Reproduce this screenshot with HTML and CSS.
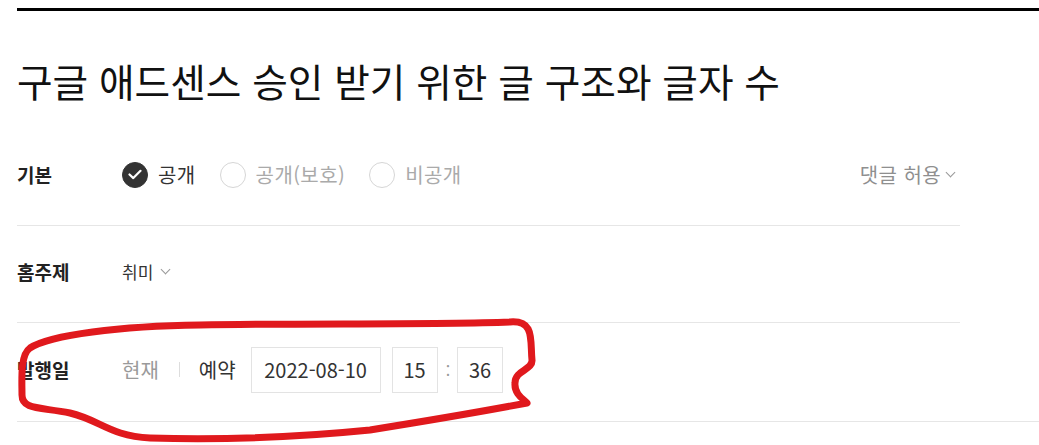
FILE: index.html
```html
<!DOCTYPE html>
<html lang="ko">
<head>
    <meta charset="UTF-8">
    <meta name="viewport" content="width=device-width, initial-scale=1.0">
    <title>글쓰기 발행</title>
    <link rel="stylesheet" href="styles.css">
</head>
<body>
    <div class="editor">
        <h1 class="post-title">구글 애드센스 승인 받기 위한 글 구조와 글자 수</h1>

        <div class="publish-form">
            <div class="form-row">
                <div class="row-label">기본</div>
                <div class="row-body">
                    <label class="radio checked"><span class="radio-mark">
                        <svg width="14" height="11" viewBox="0 0 14 11"><path d="M1.5 5.5l3.8 3.6L12.5 1.8" fill="none" stroke="#fff" stroke-width="2.2" stroke-linecap="round" stroke-linejoin="round"/></svg>
                    </span>공개</label>
                    <label class="radio"><span class="radio-mark"></span>공개(보호)</label>
                    <label class="radio"><span class="radio-mark"></span>비공개</label>
                    <div class="comment-opt">댓글 허용<span class="chevron"></span></div>
                </div>
            </div>

            <div class="form-row">
                <div class="row-label">홈주제</div>
                <div class="row-body">
                    <div class="select">취미<span class="chevron"></span></div>
                </div>
            </div>

            <div class="form-row last">
                <div class="row-label">발행일</div>
                <div class="row-body">
                    <span class="date-tab">현재</span>
                    <span class="tab-bar"></span>
                    <span class="date-tab active">예약</span>
                    <div class="date-box wide">2022-08-10</div>
                    <div class="date-box">15</div>
                    <span class="colon">:</span>
                    <div class="date-box">36</div>
                </div>
            </div>
        </div>
        <div class="bottom-rule"></div>

        <!-- red marker drawn over the publish date row -->
        <svg class="marker" width="1039" height="445" viewBox="0 0 1039 445">
            <path d="M200 325 C300 323,430 325,510 322 C535 320,530 340,532 360 C533 370,515 370,515 383 C514 395,525 400,527 403 C490 410,420 422,370 430 C300 437,220 440,150 438 C110 436,100 420,70 413 C40 407,22 410,22 395 C22 380,20 355,30 348 C50 335,120 326,200 325 Z" fill="none" stroke="#e0191d" stroke-width="7" stroke-linecap="round" stroke-linejoin="round"/>
        </svg>
    </div>
</body>
</html>
```

FILE: styles.css
```css
body {
    margin: 0;
    background: #fff;
    font-family: "Noto Sans CJK KR", "Noto Sans", sans-serif;
    color: #222;
}
.editor {
    position: relative;
    padding-top: 8px;
    height: 437px;
    overflow: hidden;
}
.post-title {
    margin: 0 0 0 17px;
    padding-top: 37px;
    border-top: 3px solid #000;
    font-size: 38.7px;
    font-weight: 400;
    line-height: 64px;
    color: #111;
}
.publish-form {
    width: 943px;
    margin-left: 17px;
    margin-top: 17px;
}
.form-row {
    display: flex;
    align-items: center;
    height: 97px;
    padding-bottom: 5px;
    box-sizing: border-box;
    border-bottom: 1px solid #e6e6e6;
}
.form-row.last {
    border-bottom: none;
    height: 98px;
}
.row-label {
    width: 105px;
    font-size: 19px;
    font-weight: 700;
    color: #222;
}
.row-body {
    flex: 1;
    display: flex;
    align-items: center;
}
.radio {
    display: flex;
    align-items: center;
    gap: 10px;
    margin-right: 24px;
    font-size: 20px;
    letter-spacing: 0.4px;
    color: #aaa;
}
.radio.checked {
    color: #333;
}
.radio-mark {
    width: 24px;
    height: 24px;
    border: 1.5px solid #d6d6d6;
    border-radius: 50%;
    display: flex;
    align-items: center;
    justify-content: center;
}
.radio.checked .radio-mark {
    background: #333;
    border-color: #333;
}
.comment-opt {
    margin-left: auto;
    font-size: 20px;
    letter-spacing: 0.4px;
    color: #8f8f8f;
    display: flex;
    align-items: center;
    margin-right: 2px;
}
.chevron {
    width: 6px;
    height: 6px;
    border-right: 1px solid #999;
    border-bottom: 1px solid #999;
    transform: rotate(45deg);
    margin: -4px 4px 0 6px;
}
.select {
    display: flex;
    align-items: center;
    font-size: 17px;
    color: #333;
}
.select .chevron {
    margin-left: 9px;
}
.date-tab {
    font-size: 20px;
    color: #9a9a9a;
}
.date-tab.active {
    color: #333;
}
.tab-bar {
    width: 1px;
    height: 15px;
    background: #ddd;
    margin: 0 19px 0 20px;
}
.date-box {
    height: 44px;
    width: 44px;
    border: 1px solid #e3e3e3;
    display: flex;
    align-items: center;
    justify-content: center;
    font-size: 20px;
    color: #333;
    margin-left: 11px;
}
.date-box.wide {
    width: 128px;
    margin-left: 15px;
}
.colon {
    margin-left: 8px;
    margin-right: -4px;
    color: #999;
    font-size: 16px;
}
.bottom-rule {
    margin-left: 17px;
    border-top: 1px solid #e6e6e6;
}
.marker {
    position: absolute;
    left: 0;
    top: 0;
    pointer-events: none;
}
```
